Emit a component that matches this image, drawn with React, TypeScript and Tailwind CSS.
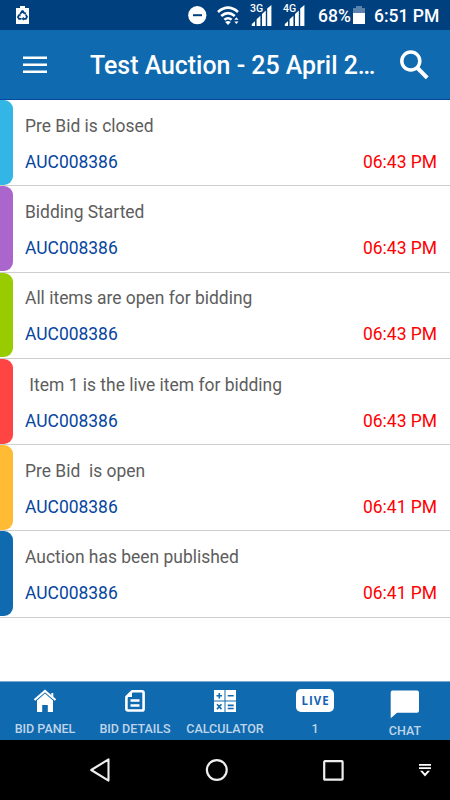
import React from "react";

const notices = [
  { text: "Pre Bid is closed", time: "06:43 PM", color: "bg-[#33b5e5]" },
  { text: "Bidding Started", time: "06:43 PM", color: "bg-[#aa66cc]" },
  { text: "All items are open for bidding", time: "06:43 PM", color: "bg-[#99cc00]" },
  { text: " Item 1 is the live item for bidding", time: "06:43 PM", color: "bg-[#ff4444]" },
  { text: "Pre Bid  is open", time: "06:41 PM", color: "bg-[#ffbb33]" },
  { text: "Auction has been published", time: "06:41 PM", color: "bg-[#106ab0]" },
];

function Signal({ label }: { label: string }) {
  return (
    <div className="relative h-[30px] w-[21px]">
      <span className="absolute -left-px top-[3px] text-[10.5px] font-medium leading-[11px]">{label}</span>
      <svg className="block" width="21" height="30" viewBox="0 0 21 30" fill="#fff">
        <path d="M0.8 24l3.2-2.8V26H0.8zM5.6 19.2l3.8-3.4V26H5.6zM11 14l3.8-3.4V26H11zM16.2 8.6L20.4 4.9V26h-4.2z" />
      </svg>
    </div>
  );
}

function StatusBar() {
  return (
    <header className="flex h-[30px] items-center bg-[#00407f] text-white">
      <svg className="ml-4" width="13" height="30" viewBox="0 0 13 30">
        <path d="M4 6h5v2h4v16H0V8h4z" fill="#fff" />
        <g fill="none" stroke="#00407f" strokeWidth="1.7">
          <path d="M4.1 14.2l2-3 .8 0 1.5 2.3" />
          <path d="M9.8 14.7l1.2 2.1-1.2 2H7.2" />
          <path d="M5.5 18.8H3L1.9 17l1.3-2" />
        </g>
        <path d="M7.2 14.1l2.7.5.3-2.7zM7.8 16.7v4l-2.3-2zM1.5 15l2.6-.9.7 2.5z" fill="#00407f" />
      </svg>
      <svg className="ml-[159px]" width="19" height="30" viewBox="0 0 19 30">
        <circle cx="9.3" cy="15.2" r="9.1" fill="#fff" />
        <path d="M5 15.2h9" stroke="#00407f" strokeWidth="2" />
      </svg>
      <svg className="ml-[10px]" width="24" height="30" viewBox="0 0 24 30" fill="none" stroke="#fff" strokeWidth="2.6">
        <path d="M1 11.9Q11 3.5 21 11.9M4.2 15.9Q11 10.2 17.8 15.9M7.4 19.8Q11 16.7 14.6 19.8" />
        <path d="M8.2 22Q11 20 13.8 22L11 25z" fill="#fff" stroke="none" />
        <path d="M17.3 19.8l2.1-2.6 2.1 2.6zM17.3 21.4l2.1 2.6 2.1-2.6z" fill="#fff" stroke="none" />
      </svg>
      <div className="ml-[10px]"><Signal label="3G" /></div>
      <div className="ml-[12px]"><Signal label="4G" /></div>
      <span className="ml-[13px] w-[34px] whitespace-nowrap pt-px text-[17.5px] font-medium leading-[30px]">68%</span>
      <svg className="ml-[1px]" width="12" height="30" viewBox="0 0 12 30">
        <path d="M3 6h6v2h3v16H0V8h3z" fill="#5b82ab" />
        <path d="M0 13h12v11H0z" fill="#fff" />
      </svg>
      <span className="ml-[9px] whitespace-nowrap pt-px text-[17.5px] font-medium leading-[30px]">6:51 PM</span>
    </header>
  );
}

function TitleBar() {
  return (
    <div className="flex h-[70px] items-center border-b border-[#0645a0] bg-[#106ab0] text-white">
      <svg className="ml-[23px]" width="24" height="18" viewBox="0 0 24 18" stroke="#fff" strokeWidth="2.5">
        <path d="M0 1.7h24M0 8.7h24M0 15.7h24" />
      </svg>
      <h1 className="ml-[43px] w-[288px] whitespace-nowrap pt-[2px] text-[24.9px] font-medium leading-[36px]">Test Auction - 25 April 2…</h1>
      <svg className="ml-[22px]" width="29" height="30" viewBox="0 0 29 30" fill="none" stroke="#fff">
        <circle cx="10.8" cy="11" r="9" strokeWidth="3.5" />
        <path d="M17.5 18l9.7 9.8" strokeWidth="4" />
      </svg>
    </div>
  );
}

const navLabel = "text-[12.5px] font-medium leading-[16px] whitespace-nowrap text-[#bfd5e9]";

function BottomNav() {
  return (
    <nav className="grid h-[59px] grid-cols-5 border-t border-[#7eaace] bg-[#106ab0]">
      <div className="flex flex-col items-center pt-[7px]">
        <svg width="24" height="24" viewBox="0 0 24 24">
          <path d="M1.5 11L12 1.9 22.5 11" fill="none" stroke="#fff" strokeWidth="2.2" />
          <path d="M18.3 4h2v4l-2-1.6zM4 11.4l8-6.8 8 6.8V23h-5.2v-7H9.2v7H4z" fill="#fff" />
        </svg>
        <span className={`${navLabel} mt-[8px]`}>BID PANEL</span>
      </div>
      <div className="flex flex-col items-center pt-[7px]">
        <svg width="22" height="24" viewBox="0 0 22 24" fill="none" stroke="#fff" strokeWidth="2.6">
          <path d="M8 2.3h10q1.6 0 1.6 1.6v16q0 1.6-1.6 1.6H4q-1.6 0-1.6-1.6V8z" strokeLinejoin="round" />
          <path d="M2 8l6-6v6z" fill="#fff" stroke="none" />
          <path d="M6.5 11.5h9M6.5 16.5h9" strokeWidth="2.4" />
        </svg>
        <span className={`${navLabel} mt-[8px]`}>BID DETAILS</span>
      </div>
      <div className="flex flex-col items-center pt-[7px]">
        <svg width="22" height="24" viewBox="0 0 22 24">
          <path d="M0 1h10.5v10.4H0zM11.5 1H22v10.4H11.5zM0 12.4h10.5V23H0zM11.5 12.4H22V23H11.5z" fill="#fff" />
          <path d="M2.5 6.7H8M5.3 4v5.5M13.7 6.7h6M13.7 16.4h6M13.7 19.5h6M3 15.3l4.5 4.8M7.5 15.3L3 20.1" stroke="#106ab0" strokeWidth="1.6" />
        </svg>
        <span className={`${navLabel} mt-[8px]`}>CALCULATOR</span>
      </div>
      <div className="flex flex-col items-center pt-[7px]">
        <span className="flex h-[23px] w-[38px] items-center justify-center rounded-[5px] bg-white pl-px font-['Open_Sans',sans-serif] text-[11.5px] font-bold leading-none tracking-[1px] text-[#1563b3]">LIVE</span>
        <span className={`${navLabel} mt-[9px]`}>1</span>
      </div>
      <div className="flex flex-col items-center pt-[7px]">
        <svg width="30" height="30" viewBox="0 0 30 30">
          <path d="M2.5 1.5h24.5q2 0 2 2v18.2q0 2-2 2H7l-6.3 5.6V3.3q0-1.8 1.8-1.8z" fill="#fff" />
        </svg>
        <span className={`${navLabel} mt-[4px]`}>CHAT</span>
      </div>
    </nav>
  );
}

function SystemNav() {
  return (
    <footer className="flex h-[60px] items-center bg-black">
      <svg className="ml-[89px]" width="22" height="26" viewBox="0 0 22 26">
        <path d="M2.2 13L19.5 2.4v21.2z" fill="none" stroke="#eee" strokeWidth="2.1" strokeLinejoin="round" />
      </svg>
      <svg className="ml-[94px]" width="24" height="24" viewBox="0 0 24 24">
        <circle cx="11.8" cy="12" r="9.9" fill="none" stroke="#eee" strokeWidth="2.2" />
      </svg>
      <svg className="ml-[93px]" width="23" height="23" viewBox="0 0 23 23">
        <rect x="2.2" y="2.2" width="18.4" height="18.4" rx="0.7" fill="none" stroke="#eee" strokeWidth="2.2" />
      </svg>
      <svg className="ml-[73px]" width="14" height="14" viewBox="0 0 14 14">
        <path d="M1 1.8h12M1 5.2h12" stroke="#fff" strokeWidth="1.8" />
        <path d="M2 7.8h2.5L7 10.4l2.5-2.6H12L7 13.4z" fill="#fff" />
      </svg>
    </footer>
  );
}

export default function App() {
  return (
    <div className="flex h-[800px] w-[450px] flex-col overflow-hidden bg-white font-[Roboto,sans-serif]">
      <StatusBar />
      <TitleBar />
      <main className="flex-1">
        {notices.map((notice) => (
          <article key={notice.text} className="flex h-[86.3px] border-b border-[#cecece]">
            <div className={`h-[84.7px] w-[12.5px] rounded-r-[9px] ${notice.color}`} />
            <div className="flex-1 pl-[12.5px] pr-[13px] pt-[14.7px] text-[17.45px]">
              <p className="whitespace-pre leading-[22px] text-[#5d5d5d]">{notice.text}</p>
              <div className="mt-[14px] flex justify-between leading-[22px]">
                <span className="text-[#0645a0]">AUC008386</span>
                <time className="text-[#ff0000]">{notice.time}</time>
              </div>
            </div>
          </article>
        ))}
      </main>
      <BottomNav />
      <SystemNav />
    </div>
  );
}
